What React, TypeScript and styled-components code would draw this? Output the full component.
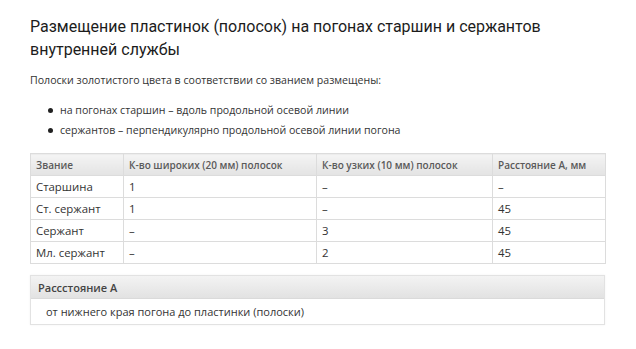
import React, { ReactElement } from 'react';
import styled, { createGlobalStyle } from 'styled-components';

const GlobalStyle = createGlobalStyle`
  html, body {
    margin: 0;
    padding: 0;
    background: #ffffff;
  }
  body {
    font-family: 'Open Sans', 'DejaVu Sans', sans-serif;
    color: #222;
  }
`;

const PageStyled = styled.div`
  width: 636px;
  height: 349px;
  box-sizing: border-box;
  padding: 15px 31px 0 30px;
  overflow: hidden;
`;

const TitleStyled = styled.h1`
  margin: 0;
  font-family: Roboto, 'Open Sans', sans-serif;
  font-size: 16px;
  font-weight: 400;
  line-height: 23px;
  color: #1c1c1c;
  white-space: nowrap;
`;

const IntroStyled = styled.p`
  margin: 11px 0 0;
  font-size: 10.6px;
  line-height: 16px;
  color: #333;
`;

const ListStyled = styled.ul`
  margin: 14px 0 0;
  padding: 0 0 0 18px;
  list-style: none;
  display: flex;
  flex-direction: column;
  gap: 4px;
`;

const ItemStyled = styled.li`
  display: flex;
  align-items: center;
  gap: 7px;
  font-size: 10.6px;
  line-height: 16px;
  color: #333;

  &::before {
    content: '';
    width: 5px;
    height: 5px;
    border-radius: 50%;
    background: #222;
  }
`;

const TableStyled = styled.table`
  margin-top: 15px;
  width: 575px;
  table-layout: fixed;
  border-collapse: collapse;
  border: 1px solid #dcdcdc;
`;

const ThStyled = styled.th<{ $width: number }>`
  box-sizing: border-box;
  width: ${({ $width }) => $width}px;
  height: 22px;
  padding: 0 5px;
  text-align: left;
  font-size: 10px;
  font-weight: 600;
  color: #5a5a5a;
  background: linear-gradient(#f4f4f4, #e3e3e3);
  border: 1px solid #dcdcdc;
`;

const TdStyled = styled.td`
  box-sizing: border-box;
  height: 22px;
  padding: 0 5px;
  font-size: 11.4px;
  color: #333;
  border: 1px solid #dcdcdc;
`;

const PanelStyled = styled.section`
  margin-top: 11px;
  width: 573px;
  border: 1px solid #e2e2e2;
  box-shadow: 0 0 2px rgba(0, 0, 0, 0.06);
`;

const PanelHeaderStyled = styled.header`
  height: 22px;
  display: flex;
  align-items: center;
  padding: 0 7px;
  font-size: 11px;
  font-weight: 600;
  color: #444;
  background: linear-gradient(#f3f3f3, #e2e2e2);
  border-bottom: 1px solid #dadada;
`;

const PanelBodyStyled = styled.div`
  height: 25px;
  display: flex;
  align-items: center;
  padding: 0 15px;
  font-size: 11px;
  color: #333;
`;

const columns = [
  { title: 'Звание', width: 93 },
  { title: 'К-во широких (20 мм) полосок', width: 193 },
  { title: 'К-во узких (10 мм) полосок', width: 176 },
  { title: 'Расстояние А, мм', width: 113 },
];

const rows = [
  ['Старшина', '1', '–', '–'],
  ['Ст. сержант', '1', '–', '45'],
  ['Сержант', '–', '3', '45'],
  ['Мл. сержант', '–', '2', '45'],
];

const App = (): ReactElement => (
  <>
    <GlobalStyle />
    <PageStyled>
      <TitleStyled>
        Размещение пластинок (полосок) на погонах старшин и сержантов
        <br />
        внутренней службы
      </TitleStyled>
      <IntroStyled>Полоски золотистого цвета в соответствии со званием размещены:</IntroStyled>
      <ListStyled>
        <ItemStyled>на погонах старшин – вдоль продольной осевой линии</ItemStyled>
        <ItemStyled>сержантов – перпендикулярно продольной осевой линии погона</ItemStyled>
      </ListStyled>
      <TableStyled>
        <thead>
          <tr>
            {columns.map((c) => (
              <ThStyled key={c.title} $width={c.width}>
                {c.title}
              </ThStyled>
            ))}
          </tr>
        </thead>
        <tbody>
          {rows.map((r) => (
            <tr key={r[0]}>
              {r.map((cell, i) => (
                <TdStyled key={i}>{cell}</TdStyled>
              ))}
            </tr>
          ))}
        </tbody>
      </TableStyled>
      <PanelStyled>
        <PanelHeaderStyled>Рассстояние А</PanelHeaderStyled>
        <PanelBodyStyled>от нижнего края погона до пластинки (полоски)</PanelBodyStyled>
      </PanelStyled>
    </PageStyled>
  </>
);

export default App;
